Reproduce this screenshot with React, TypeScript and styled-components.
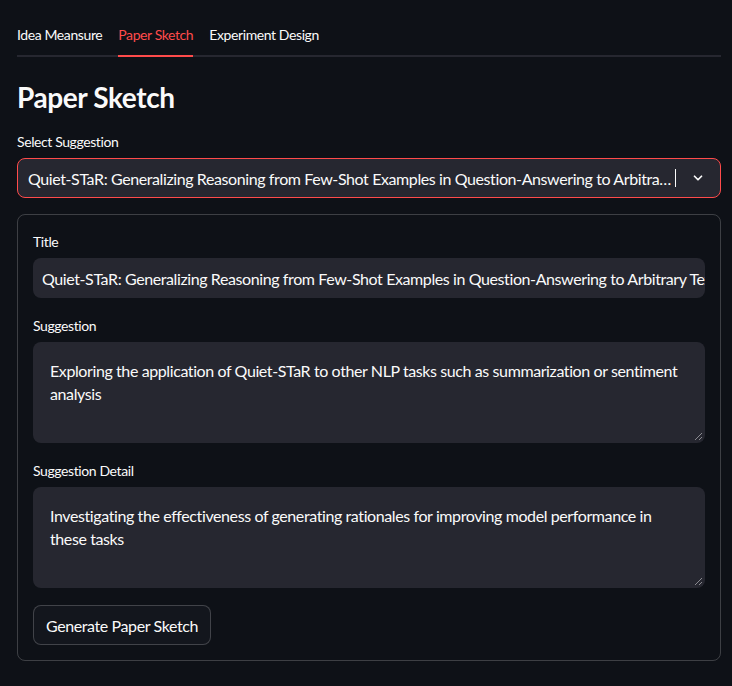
import React from "react";
import styled, { createGlobalStyle } from "styled-components";

const Global = createGlobalStyle`
  html, body { margin: 0; padding: 0; background: #0e1117; }
  body { font-family: "Lato", "Noto Sans", sans-serif; color: #fafafa; letter-spacing: -0.025em; }
  * { box-sizing: border-box; }
`;

const Page = styled.div`
  width: 732px;
  height: 686px;
  padding: 0 11px 0 17px;
  background: #0e1117;
  overflow: hidden;
`;

const Tabs = styled.div`
  display: flex;
  gap: 16px;
  height: 57px;
  align-items: flex-end;
  border-bottom: 2px solid #262730;
`;

const Tab = styled.div<{ $active?: boolean }>`
  font-size: 14px;
  line-height: 20px;
  padding-bottom: 10px;
  margin-bottom: -2px;
  color: ${(p) => (p.$active ? "#ff4b4b" : "#fafafa")};
  border-bottom: 2px solid ${(p) => (p.$active ? "#ff4b4b" : "transparent")};
`;

const Title = styled.h1`
  margin: 22px 0 0;
  font-size: 28px;
  font-weight: 700;
  line-height: 36px;
`;

const Label = styled.div`
  font-size: 14px;
  line-height: 20px;
  margin-bottom: 6px;
`;

const Field = styled.div<{ $gap?: number }>`
  margin-top: ${(p) => p.$gap ?? 0}px;
`;

const Select = styled.div`
  display: flex;
  align-items: center;
  height: 40px;
  border: 1px solid #ff4b4b;
  border-radius: 8px;
  background: #262730;
  padding: 0 8px 0 10px;
`;

const SelectText = styled.div`
  flex: 1;
  font-size: 16px;
  white-space: nowrap;
  overflow: hidden;
  text-overflow: ellipsis;
`;

const Caret = styled.div`
  width: 1px;
  height: 18px;
  background: #fafafa;
  margin: 0 12px 0 3px;
`;

const Chevron = styled.div`
  display: flex;
  align-items: center;
  justify-content: center;
  width: 20px;
  margin-right: 4px;
`;

const Card = styled.div`
  margin-top: 16px;
  border: 1px solid rgba(250, 250, 250, 0.2);
  border-radius: 8px;
  padding: 17px 15px 15px;
`;

const Input = styled.div`
  height: 40px;
  display: flex;
  align-items: center;
  background: #262730;
  border-radius: 8px;
  padding: 0 9px;
  font-size: 16px;
  white-space: nowrap;
  overflow: hidden;
`;

const TextArea = styled.div`
  position: relative;
  height: 101px;
  background: #262730;
  border-radius: 8px;
  padding: 17px 16px 17px 17px;
  font-size: 16px;
  line-height: 23px;
`;

const Grip = styled.svg`
  position: absolute;
  right: 2px;
  bottom: 2px;
`;

const Button = styled.button`
  margin-top: 17px;
  height: 40px;
  padding: 0 12px;
  border: 1px solid rgba(250, 250, 250, 0.2);
  border-radius: 8px;
  background: #13161d;
  color: #fafafa;
  font-family: inherit;
  letter-spacing: inherit;
  font-size: 16px;
`;

const ResizeGrip = () => (
  <Grip width="9" height="9" viewBox="0 0 9 9">
    <path d="M8 1 L1 8 M8 5 L5 8" stroke="#8a8a90" strokeWidth="1" />
  </Grip>
);

export default function App() {
  return (
    <Page>
      <Global />
      <Tabs>
        <Tab>Idea Meansure</Tab>
        <Tab $active>Paper Sketch</Tab>
        <Tab>Experiment Design</Tab>
      </Tabs>
      <Title>Paper Sketch</Title>
      <Field $gap={17}>
        <Label>Select Suggestion</Label>
        <Select>
          <SelectText>
            Quiet-STaR: Generalizing Reasoning from Few-Shot Examples in Question-Answering to Arbitrary Text
          </SelectText>
          <Caret />
          <Chevron>
            <svg width="14" height="14" viewBox="0 0 24 24" fill="none" stroke="#fafafa" strokeWidth="3" strokeLinecap="round" strokeLinejoin="round">
              <path d="M6 9l6 6 6-6" />
            </svg>
          </Chevron>
        </Select>
      </Field>
      <Card>
        <Field>
          <Label>Title</Label>
          <Input>
            Quiet-STaR: Generalizing Reasoning from Few-Shot Examples in Question-Answering to Arbitrary Text Domains
          </Input>
        </Field>
        <Field $gap={18}>
          <Label>Suggestion</Label>
          <TextArea>
            Exploring the application of Quiet-STaR to other NLP tasks such as summarization or sentiment analysis
            <ResizeGrip />
          </TextArea>
        </Field>
        <Field $gap={18}>
          <Label>Suggestion Detail</Label>
          <TextArea>
            Investigating the effectiveness of generating rationales for improving model performance in these tasks
            <ResizeGrip />
          </TextArea>
        </Field>
        <Button>Generate Paper Sketch</Button>
      </Card>
    </Page>
  );
}
